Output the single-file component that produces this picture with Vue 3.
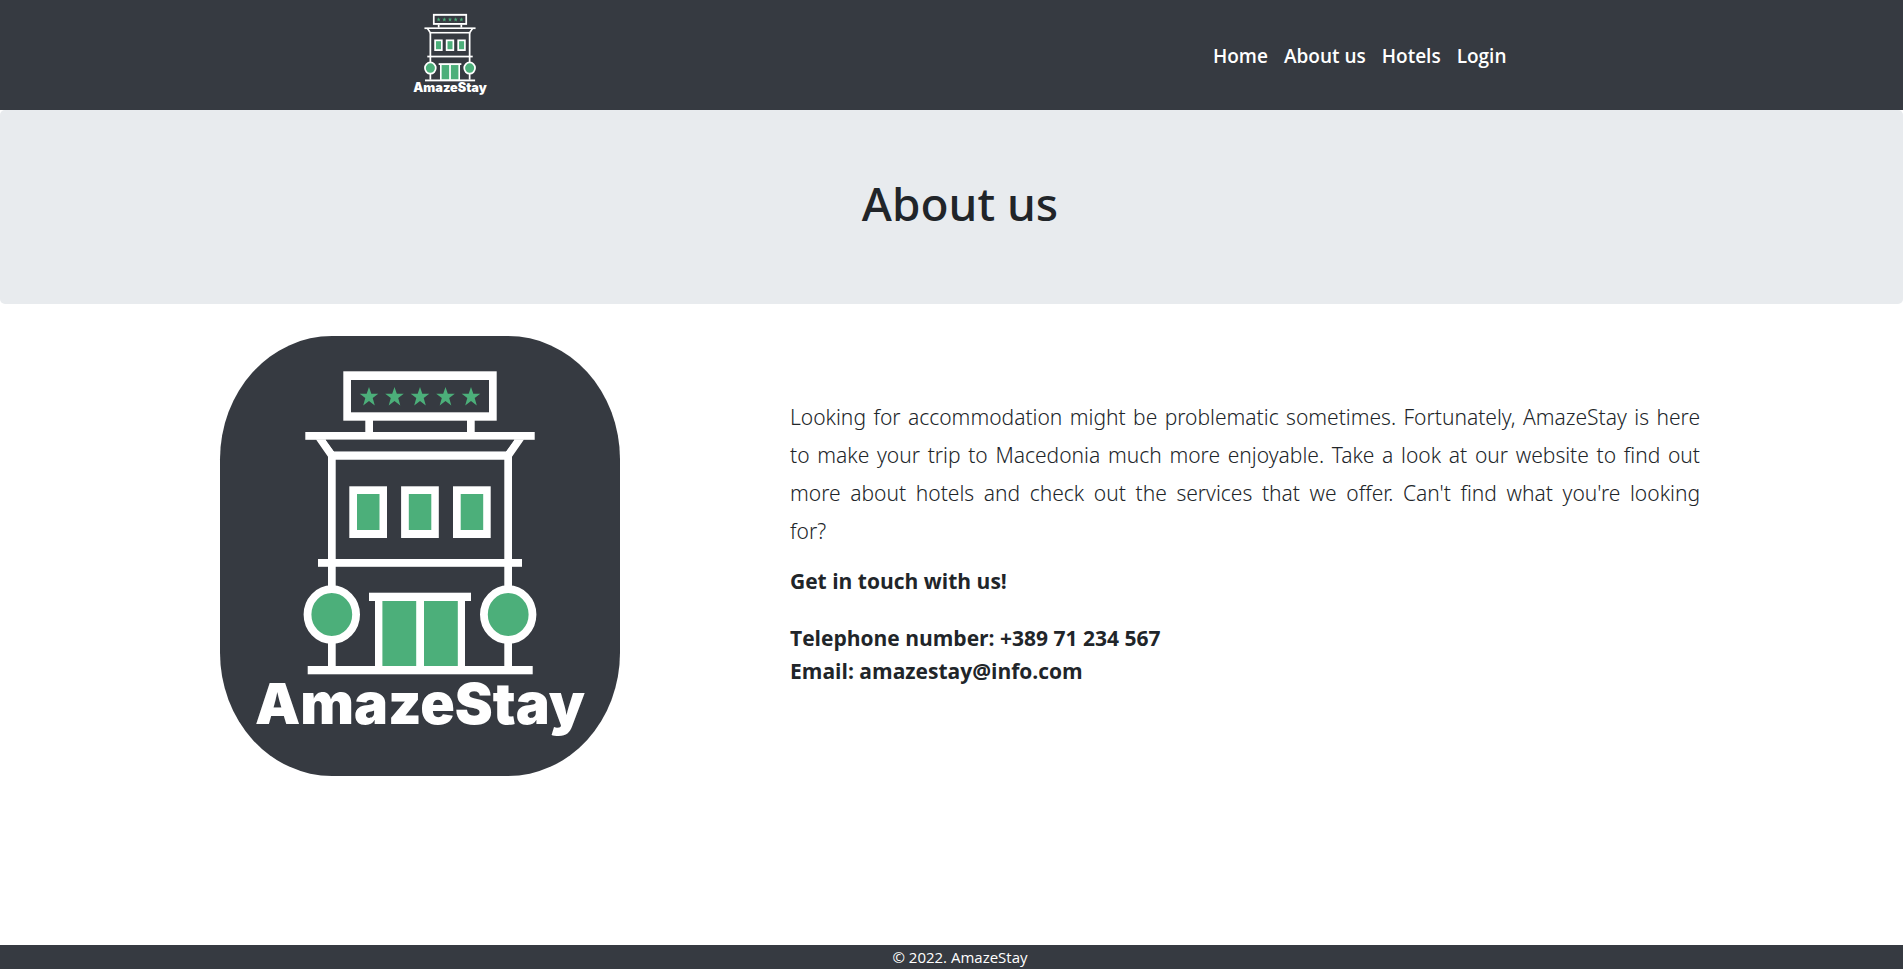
<script setup>
import { h } from 'vue'

const links = ['Home', 'About us', 'Hotels', 'Login']
const starCenters = [149, 174.5, 200, 225.5, 251]
const windowLefts = [129.3, 181.1, 233]
const treeCenters = [111.8, 288.2]
const STAR = 'M0 -9.8L2.3 -3H9.3L3.7 1.2L5.8 8.9L0 4.4L-5.8 8.9L-3.7 1.2L-9.3 -3H-2.3Z'

const rect = (x, y, width, height, fill = '#fff') => h('rect', { x, y, width, height, fill })

const HotelArt = () =>
  h('svg', { viewBox: '0 0 400 440', role: 'img', 'aria-label': 'AmazeStay' }, [
    rect(123.3, 35.3, 153.4, 49.4),
    rect(131, 44, 138, 32.3, '#363a41'),
    ...starCenters.map((x) => h('path', { d: STAR, fill: '#4caf7a', transform: `translate(${x} 60.7)` })),
    rect(145.3, 84, 7.7, 13),
    rect(247, 84, 7.7, 13),
    rect(85.3, 96, 229.4, 7.8),
    h('path', { d: 'M96 103.5H105.7L114 115.3H286L294.3 103.5H304L292 120.7V123.7H108V120.7Z', fill: '#fff' }),
    h('path', { d: 'M105.7 103.7H294.3L286 115.3H114Z', fill: '#363a41' }),
    rect(108, 120, 7.7, 211),
    rect(284.3, 120, 7.7, 211),
    ...windowLefts.flatMap((x) => [
      rect(x, 150.3, 37.7, 51.7),
      rect(x + 7.7, 158, 22.5, 36, '#4caf7a'),
    ]),
    rect(98, 223, 204, 7.8),
    ...treeCenters.map((cx) =>
      h('ellipse', { cx, cy: 278.6, rx: 24.3, ry: 25.4, fill: '#4caf7a', stroke: '#fff', 'stroke-width': 7.8 })
    ),
    rect(155, 262, 90, 70),
    rect(162.4, 265, 33.8, 65, '#4caf7a'),
    rect(204, 265, 33.8, 65, '#4caf7a'),
    rect(149, 256.7, 102, 8.3),
    rect(87.7, 330, 225, 8.3),
    h(
      'text',
      {
        x: 200,
        y: 388,
        fill: '#fff',
        'text-anchor': 'middle',
        'font-family': 'Inter, sans-serif',
        'font-size': 57,
        'font-weight': 900,
      },
      'AmazeStay'
    ),
  ])
</script>

<template>
  <div class="page">
    <header class="topbar">
      <div class="topbar-inner">
        <a class="brand" href="#"><HotelArt /></a>
        <nav class="nav">
          <a v-for="link in links" :key="link" href="#">{{ link }}</a>
        </nav>
      </div>
    </header>

    <section class="hero">
      <h1>About us</h1>
    </section>

    <main class="about">
      <div class="logo"><HotelArt /></div>
      <div class="copy">
        <p class="lead">
          <span class="filled">
            Looking for accommodation might be problematic sometimes. Fortunately, AmazeStay is here to make
            your trip to Macedonia much more enjoyable. Take a look at our website to find out more about
            hotels and check out the services that we offer. Can't find what you're looking
          </span>
          for?
        </p>
        <p class="touch">Get in touch with us!</p>
        <p class="contact">
          Telephone number: +389 71 234 567<br />
          Email: amazestay@info.com
        </p>
      </div>
    </main>

    <footer class="footer">© 2022. AmazeStay</footer>
  </div>
</template>

<style>
body {
  margin: 0;
}
</style>

<style scoped>
.page {
  display: flex;
  flex-direction: column;
  min-height: 100vh;
  background: #fff;
  color: #212529;
  font-family: "Segoe UI", "Open Sans", "Noto Sans", sans-serif;
}
.page * {
  box-sizing: border-box;
}
.topbar {
  padding: 6px 16px 6px 24px;
  background: #363a41;
}
.topbar-inner {
  display: flex;
  align-items: center;
  justify-content: space-between;
  max-width: 1102px;
  margin: 0 auto;
}
.brand {
  width: 90px;
  height: 98px;
}
.brand svg,
.logo svg {
  display: block;
  width: 100%;
  height: 100%;
}
.nav {
  display: flex;
  gap: 16px;
  padding-top: 2px;
}
.nav a {
  color: #fff;
  font-size: 19px;
  font-weight: 600;
  line-height: 30px;
  text-decoration: none;
}
.hero {
  padding: 64px 0 71px 17px;
  border-radius: 5px;
  background: #e8ebee;
  text-align: center;
}
.hero h1 {
  margin: 0;
  font-family: "Segoe UI", "Noto Sans", sans-serif;
  font-size: 46px;
  font-weight: 500;
  line-height: 59px;
}
.about {
  display: grid;
  grid-template-columns: 400px 1fr;
  gap: 170px;
  width: 100%;
  max-width: 1497px;
  margin: 32px auto;
  padding-left: 17px;
}
.logo {
  height: 440px;
  border-radius: 28%;
  background: #363a41;
}
.copy {
  padding-top: 62px;
  font-size: 21px;
}
.copy p {
  margin: 0;
}
.copy .lead {
  font-family: "Segoe UI", "Noto Sans", sans-serif;
  font-weight: 300;
  line-height: 38px;
  text-align: justify;
}
.lead .filled {
  display: block;
  text-align-last: justify;
}
.copy .touch,
.copy .contact {
  font-weight: 700;
  line-height: 33px;
}
.copy .touch {
  margin-top: 15px;
}
.copy .contact {
  margin-top: 24px;
}
.footer {
  margin-top: auto;
  padding-left: 17px;
  background: #363a41;
  color: #fff;
  font-size: 15px;
  line-height: 24px;
  text-align: center;
}
</style>
